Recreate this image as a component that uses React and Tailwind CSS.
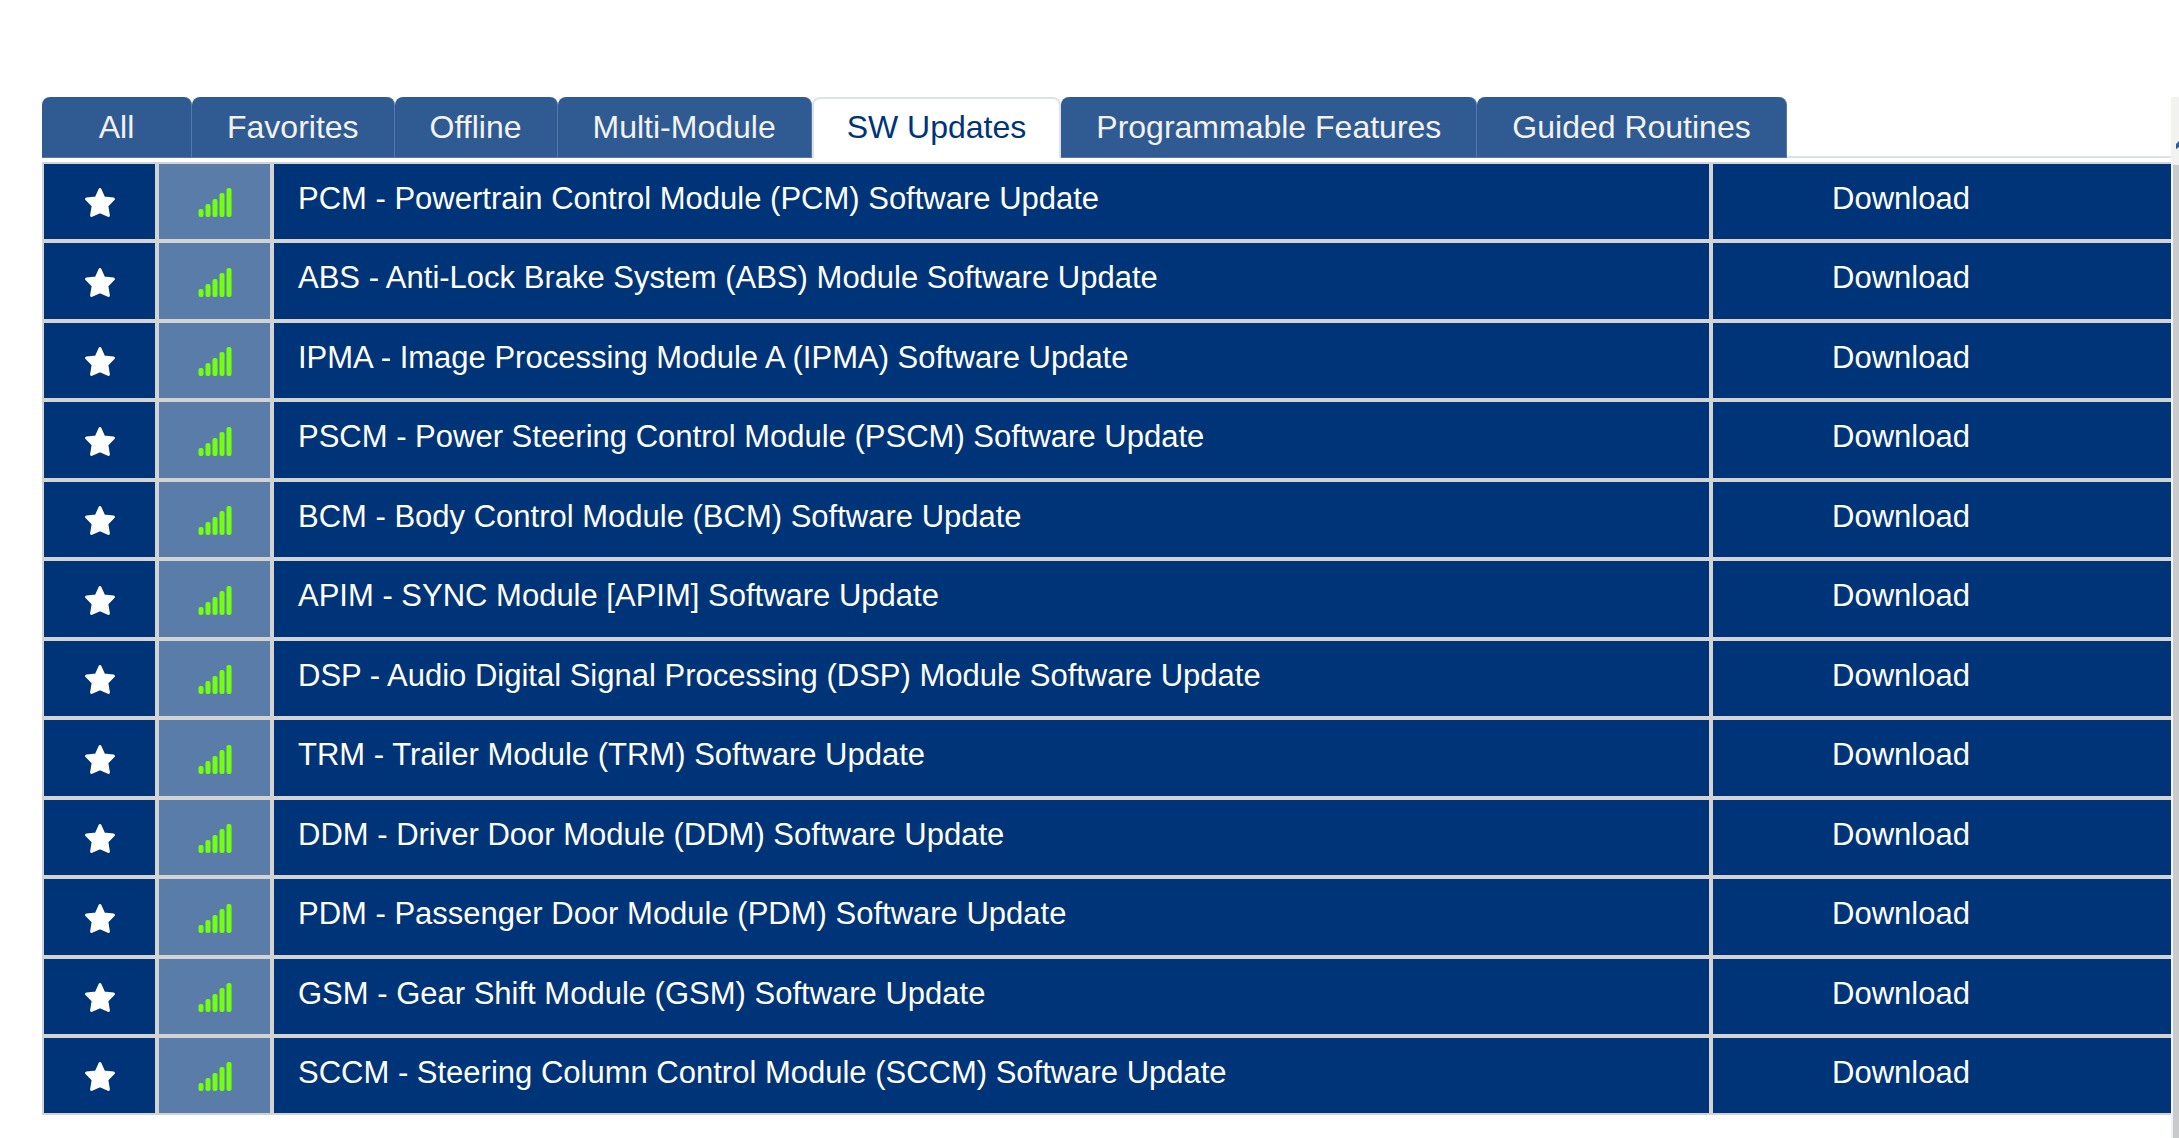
const TABS = [
  'All',
  'Favorites',
  'Offline',
  'Multi-Module',
  'SW Updates',
  'Programmable Features',
  'Guided Routines',
];

const UPDATES = [
  'PCM - Powertrain Control Module (PCM) Software Update',
  'ABS - Anti-Lock Brake System (ABS) Module Software Update',
  'IPMA - Image Processing Module A (IPMA) Software Update',
  'PSCM - Power Steering Control Module (PSCM) Software Update',
  'BCM - Body Control Module (BCM) Software Update',
  'APIM - SYNC Module [APIM] Software Update',
  'DSP - Audio Digital Signal Processing (DSP) Module Software Update',
  'TRM - Trailer Module (TRM) Software Update',
  'DDM - Driver Door Module (DDM) Software Update',
  'PDM - Passenger Door Module (PDM) Software Update',
  'GSM - Gear Shift Module (GSM) Software Update',
  'SCCM - Steering Column Control Module (SCCM) Software Update',
];

const ACTIVE_TAB = 'SW Updates';

export default function App() {
  return (
    <div className="flex min-h-screen bg-white pt-[97px] font-['Liberation_Sans',Arial,sans-serif]">
      <main className="min-w-0 flex-1 pl-[42px]">
        <TabBar />
        <UpdateTable />
      </main>
      <SidePanel />
    </div>
  );
}

function TabBar() {
  return (
    <nav className="mb-1 flex h-[61px] border-b-2 border-[#dee2e6]">
      {TABS.map((tab) => (
        <Tab key={tab} label={tab} active={tab === ACTIVE_TAB} />
      ))}
    </nav>
  );
}

function Tab({ label, active }) {
  const colors = active
    ? 'border-2 border-b-0 border-[#dee2e6] bg-white px-[33px] pb-1 text-[#003478]'
    : 'border-r border-b border-[#5478a8] bg-[#305b92] px-[35px] pb-px text-[#f2f2f2]';

  return (
    <button
      type="button"
      className={`h-[61px] min-w-[150px] shrink-0 rounded-t-lg text-[32px] leading-[48px] whitespace-nowrap ${colors}`}
    >
      {label}
    </button>
  );
}

function UpdateTable() {
  return (
    <table className="w-full table-fixed border-separate border-spacing-0 text-[31px] leading-[46px] text-white">
      <colgroup>
        <col className="w-[115px]" />
        <col className="w-[115px]" />
        <col />
        <col className="w-[460px]" />
      </colgroup>
      <tbody>
        {UPDATES.map((name) => (
          <UpdateRow key={name} name={name} />
        ))}
      </tbody>
    </table>
  );
}

function UpdateRow({ name }) {
  return (
    <tr className="h-[79px] even:not-last:h-[80px]">
      <td className="border-2 border-[#d3d3d3] bg-[#003478] px-0 pt-[3px] pb-0">
        <button type="button" aria-label="Favorite" className="mx-auto block">
          <StarIcon />
        </button>
      </td>
      <td className="border-2 border-[#d3d3d3] bg-[#5a7ca9] px-0 pt-[3px] pb-0">
        <SignalIcon />
      </td>
      <td className="truncate border-2 border-[#d3d3d3] bg-[#003478] pt-0 pr-4 pb-[6px] pl-6">{name}</td>
      <td className="border-2 border-r-0 border-[#d3d3d3] bg-[#003478] pt-0 pr-[82px] pb-[6px] pl-0 text-center">
        <button type="button">Download</button>
      </td>
    </tr>
  );
}

function StarIcon() {
  return (
    <svg className="h-[30px] w-[30px]" viewBox="0 0 30 30" fill="#fff" stroke="#fff" strokeWidth="3" strokeLinejoin="round">
      <path d="M15 1.6 L18.8 10 L28.4 11 L21.8 17.8 L23.4 27.4 L15 23.6 L6.6 27.4 L8.2 17.8 L1.6 11 L11.2 10 Z" />
    </svg>
  );
}

function SignalIcon() {
  return (
    <svg className="mx-auto block h-[30px] w-[34px]" viewBox="0 0 34 30" fill="#74ff10" role="img" aria-label="Signal available">
      <rect x="0.5" y="21" width="5" height="8" rx="2" />
      <rect x="7.5" y="16" width="5" height="13" rx="2" />
      <rect x="14.5" y="11" width="5" height="18" rx="2" />
      <rect x="21.5" y="5" width="5" height="24" rx="2" />
      <rect x="28.5" y="0" width="5" height="29" rx="2" />
    </svg>
  );
}

// Edge of the neighbouring panel, cut off by the window
function SidePanel() {
  return (
    <aside className="flex w-2 shrink-0 flex-col overflow-hidden border-l-2 border-[#f2f2f0] bg-[#c9cacc]">
      <div className="h-[68px] bg-[#f2f2f0] pt-[42px] pl-[3px]">
        <svg className="h-3 w-3" viewBox="0 0 12 12" fill="#305b92">
          <path d="M0 10 V5 L5 0 H12 V4 H6 L2 9 Z" />
        </svg>
      </div>
    </aside>
  );
}
